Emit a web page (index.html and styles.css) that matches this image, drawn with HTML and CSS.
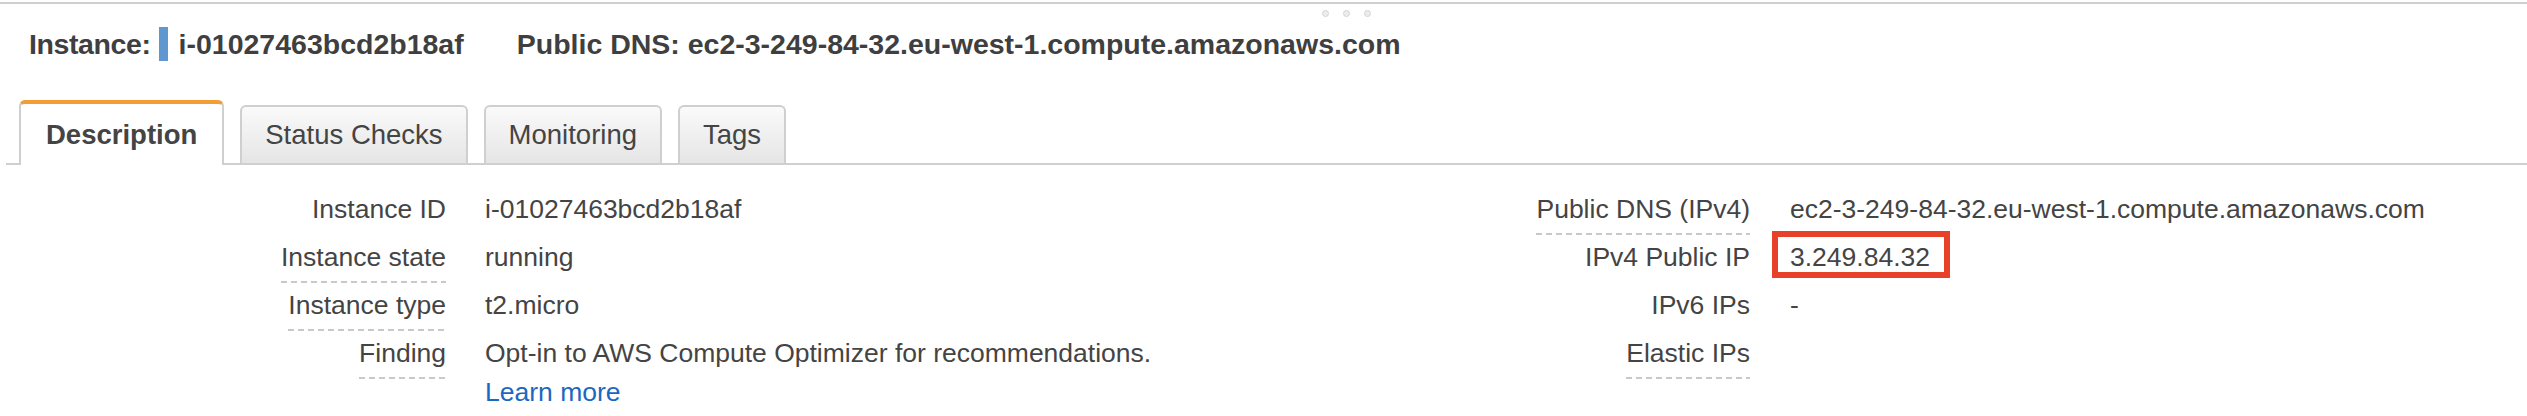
FILE: index.html
```html
<!DOCTYPE html>
<html>
<head>
<meta charset="utf-8">
<link rel="stylesheet" href="styles.css">
</head>
<body>
<div class="pane">
  <div class="resizer">
    <span class="dot"></span><span class="dot"></span><span class="dot"></span>
  </div>
  <div class="header">
    <span class="h-label">Instance:</span>
    <span class="h-bar"></span>
    <span class="h-id">i-01027463bcd2b18af</span>
    <span class="h-dns">Public DNS: ec2-3-249-84-32.eu-west-1.compute.amazonaws.com</span>
  </div>
  <div class="tabs">
    <div class="tab active">Description</div>
    <div class="tab">Status Checks</div>
    <div class="tab">Monitoring</div>
    <div class="tab">Tags</div>
  </div>
  <div class="details">
    <div class="col col-left">
      <div class="lbl"><span>Instance ID</span></div>
      <div class="val">i-01027463bcd2b18af</div>
      <div class="lbl"><span class="dashed">Instance state</span></div>
      <div class="val">running</div>
      <div class="lbl"><span class="dashed">Instance type</span></div>
      <div class="val">t2.micro</div>
      <div class="lbl"><span class="dashed">Finding</span></div>
      <div class="val">Opt-in to AWS Compute Optimizer for recommendations.<br><a class="link" href="#">Learn more</a></div>
    </div>
    <div class="col col-right">
      <div class="lbl"><span class="dashed">Public DNS (IPv4)</span></div>
      <div class="val">ec2-3-249-84-32.eu-west-1.compute.amazonaws.com</div>
      <div class="lbl"><span>IPv4 Public IP</span></div>
      <div class="val"><span class="hl">3.249.84.32</span></div>
      <div class="lbl"><span>IPv6 IPs</span></div>
      <div class="val">-</div>
      <div class="lbl"><span class="dashed">Elastic IPs</span></div>
      <div class="val"></div>
    </div>
  </div>
</div>
</body>
</html>
```
FILE: styles.css
```css
html, body {
  margin: 0;
  padding: 0;
  background: #fff;
}
body {
  font-family: "Liberation Sans", Arial, Helvetica, sans-serif;
  color: #444;
}
.pane {
  padding-top: 2px;
}
.resizer {
  border-top: 2px solid #cfcfcf;
  padding: 6px 0 0 1322px;
  display: flex;
  gap: 14px;
  height: 7px;
}
.dot {
  width: 7px;
  height: 7px;
  border-radius: 50%;
  box-sizing: border-box;
  border: 1px solid #d4d4d4;
  background: #ececec;
}
.header {
  margin-top: 10px;
  height: 34px;
  display: flex;
  align-items: center;
  padding-left: 29px;
  font-weight: bold;
  font-size: 28.5px;
  color: #3f3f3f;
}
.h-label {
  letter-spacing: -0.4px;
}
.h-bar {
  width: 9px;
  height: 34px;
  background: #5f97d1;
  margin: 0 11px 0 8px;
}
.h-dns {
  margin-left: 53px;
}
.tabs {
  margin-top: 39px;
  margin-left: 6px;
  padding-left: 13px;
  height: 63px;
  border-bottom: 2px solid #cfcfcf;
  display: flex;
  align-items: flex-end;
  gap: 16px;
}
.tab {
  height: 56px;
  line-height: 56px;
  padding: 0 23px;
  font-size: 27.5px;
  color: #444;
  border: 2px solid #cfcfcf;
  border-bottom: none;
  border-radius: 6px 6px 0 0;
  background: linear-gradient(#fafafa, #e5e5e5);
}
.tab.active {
  height: 61px;
  line-height: 61px;
  border-top: 4px solid #f49c35;
  background: #fff;
  font-weight: bold;
  margin-bottom: -2px;
  padding: 0 25px;
}
.details {
  margin-top: 25px;
  display: flex;
  font-size: 26.5px;
  line-height: 39px;
}
.col {
  display: grid;
  row-gap: 9px;
  align-content: start;
}
.col-left {
  width: 1410px;
  grid-template-columns: 446px 1fr;
  column-gap: 39px;
}
.col-right {
  grid-template-columns: 340px auto;
  column-gap: 40px;
}
.lbl {
  text-align: right;
}
.dashed {
  padding-bottom: 11px;
  background: repeating-linear-gradient(90deg, #c9c9c9 0 6px, transparent 6px 10px) left bottom / 100% 2px no-repeat;
}
.link {
  color: #1a68c0;
  text-decoration: none;
}
.hl {
  position: relative;
}
.hl::after {
  content: "";
  position: absolute;
  left: -18px;
  right: -20px;
  top: -11px;
  bottom: -6px;
  border: 6px solid #e8412a;
}
```
